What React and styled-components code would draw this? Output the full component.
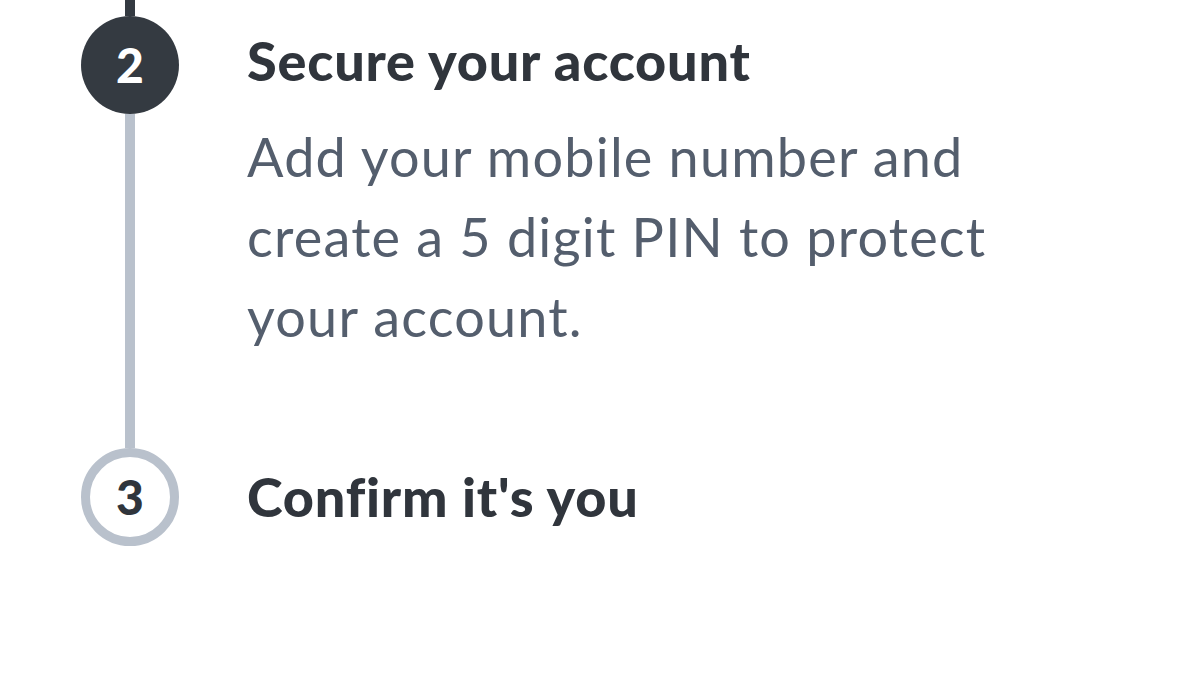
import React from "react";
import styled, { createGlobalStyle } from "styled-components";

const GlobalStyle = createGlobalStyle`
  html, body {
    margin: 0;
    padding: 0;
    background: #ffffff;
  }
  body {
    font-family: 'Lato', 'Noto Sans', sans-serif;
  }
`;

const Page = styled.div`
  width: 1200px;
  height: 675px;
  overflow: hidden;
  background: #ffffff;
`;

const Stepper = styled.ol`
  list-style: none;
  margin: 0;
  padding: 0 0 0 81px;
  display: flex;
  flex-direction: column;
`;

const Step = styled.li`
  display: flex;
  align-items: ${(p) => (p.$center ? "center" : "stretch")};
  gap: 68px;
`;

const Rail = styled.div`
  width: 98px;
  flex-shrink: 0;
  display: flex;
  flex-direction: column;
  align-items: center;
`;

const Line = styled.div`
  width: 10px;
  background: ${(p) => (p.$done ? "#343a41" : "#b9c1cc")};
  height: ${(p) => (p.$height ? `${p.$height}px` : "auto")};
  flex: ${(p) => (p.$height ? "none" : "1")};
`;

const Circle = styled.div`
  width: 98px;
  height: 98px;
  box-sizing: border-box;
  border-radius: 50%;
  display: flex;
  align-items: center;
  justify-content: center;
  font-family: 'Lato', 'Noto Sans', sans-serif;
  font-weight: 900;
  font-size: 48px;
  line-height: 1;
  background: ${(p) => (p.$active ? "#343a41" : "#ffffff")};
  color: ${(p) => (p.$active ? "#ffffff" : "#30353c")};
  border: ${(p) => (p.$active ? "none" : "9px solid #b9c1cc")};
`;

const Content = styled.div`
  padding: ${(p) => (p.$pad ? "34px 0 91px" : "0")};
  display: flex;
  flex-direction: column;
  gap: 29px;
`;

const Title = styled.h2`
  margin: 0;
  font-family: 'Lato', 'Noto Sans', sans-serif;
  font-weight: 900;
  font-size: 54px;
  line-height: 54px;
  color: #30353c;
  letter-spacing: 0.8px;
`;

const Description = styled.p`
  margin: 0;
  width: 780px;
  font-family: 'Lato', 'Noto Sans', sans-serif;
  font-weight: 400;
  font-size: 54px;
  line-height: 80px;
  color: #545e6d;
  letter-spacing: 1.2px;
`;

export default function App() {
  return (
    <Page>
      <GlobalStyle />
      <Stepper>
        <Step>
          <Rail>
            <Line $done $height={16} />
            <Circle $active>2</Circle>
            <Line />
          </Rail>
          <Content $pad>
            <Title>Secure your account</Title>
            <Description>
              Add your mobile number and create a 5 digit PIN to protect your
              account.
            </Description>
          </Content>
        </Step>
        <Step $center>
          <Rail>
            <Circle>3</Circle>
          </Rail>
          <Content>
            <Title>Confirm it's you</Title>
          </Content>
        </Step>
      </Stepper>
    </Page>
  );
}
